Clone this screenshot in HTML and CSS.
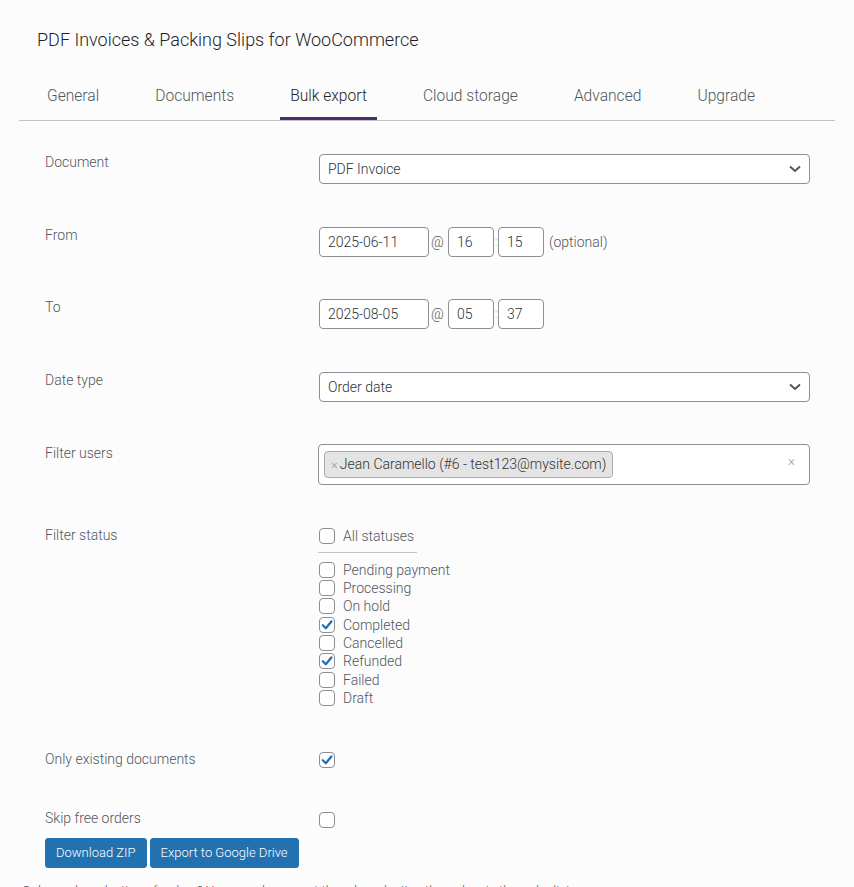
FILE: index.html
```html
<!DOCTYPE html>
<html lang="en">
<head>
<meta charset="utf-8">
<title>Bulk export</title>
<link rel="stylesheet" href="styles.css">
</head>
<body>
<div class="wrap">
  <h1 class="title">PDF Invoices &amp; Packing Slips for WooCommerce</h1>
  <nav class="tabs">
    <a class="tab">General</a>
    <a class="tab">Documents</a>
    <a class="tab active">Bulk export</a>
    <a class="tab">Cloud storage</a>
    <a class="tab">Advanced</a>
    <a class="tab">Upgrade</a>
  </nav>

  <div class="form">
    <div class="row">
      <div class="label">Document</div>
      <div class="field">
        <div class="select"><span>PDF Invoice</span>
          <svg class="chev" width="12" height="8" viewBox="0 0 12 8"><polyline points="1,1.5 6,6 11,1.5" fill="none" stroke="#50575e" stroke-width="2"/></svg>
        </div>
      </div>
    </div>

    <div class="row">
      <div class="label">From</div>
      <div class="field inline">
        <div class="input date">2025-06-11</div><span class="sep at">@</span><div class="input time">16</div><span class="sep colon">:</span><div class="input time">15</div><span class="opt">(optional)</span>
      </div>
    </div>

    <div class="row">
      <div class="label">To</div>
      <div class="field inline">
        <div class="input date">2025-08-05</div><span class="sep at">@</span><div class="input time">05</div><span class="sep colon">:</span><div class="input time">37</div>
      </div>
    </div>

    <div class="row">
      <div class="label">Date type</div>
      <div class="field">
        <div class="select"><span>Order date</span>
          <svg class="chev" width="12" height="8" viewBox="0 0 12 8"><polyline points="1,1.5 6,6 11,1.5" fill="none" stroke="#50575e" stroke-width="2"/></svg>
        </div>
      </div>
    </div>

    <div class="row">
      <div class="label">Filter users</div>
      <div class="field flush">
        <div class="multi">
          <span class="chip"><span class="chip-x">×</span>Jean Caramello (#6 - test123@mysite.com)</span>
          <span class="clear">×</span>
        </div>
      </div>
    </div>

    <div class="row status">
      <div class="label">Filter status</div>
      <div class="field flush">
        <label class="check"><span class="box"></span>All statuses</label>
        <div class="divider"></div>
        <label class="check"><span class="box"></span>Pending payment</label>
        <label class="check"><span class="box"></span>Processing</label>
        <label class="check"><span class="box"></span>On hold</label>
        <label class="check"><span class="box on"><svg width="14" height="14" viewBox="0 0 14 14"><path d="M2.8 7.2 L5.8 10.2 L11.4 3.4" fill="none" stroke="#2271b1" stroke-width="2.3" stroke-linecap="round" stroke-linejoin="round"/></svg></span>Completed</label>
        <label class="check"><span class="box"></span>Cancelled</label>
        <label class="check"><span class="box on"><svg width="14" height="14" viewBox="0 0 14 14"><path d="M2.8 7.2 L5.8 10.2 L11.4 3.4" fill="none" stroke="#2271b1" stroke-width="2.3" stroke-linecap="round" stroke-linejoin="round"/></svg></span>Refunded</label>
        <label class="check"><span class="box"></span>Failed</label>
        <label class="check"><span class="box"></span>Draft</label>
      </div>
    </div>

    <div class="row">
      <div class="label">Only existing documents</div>
      <div class="field single">
        <span class="box"><svg width="14" height="14" viewBox="0 0 14 14"><path d="M2.8 7.2 L5.8 10.2 L11.4 3.4" fill="none" stroke="#2271b1" stroke-width="2.3" stroke-linecap="round" stroke-linejoin="round"/></svg></span>
      </div>
    </div>

    <div class="row last">
      <div class="label">Skip free orders</div>
      <div class="field single lower">
        <span class="box"></span>
      </div>
    </div>
  </div>

  <div class="buttons">
    <button class="btn">Download ZIP</button>
    <button class="btn">Export to Google Drive</button>
  </div>

  <p class="note">Only need a selection of orders? You can also export them by selecting the orders in the order list.</p>
</div>
</body>
</html>
```

FILE: styles.css
```css
html, body {
  margin: 0;
  padding: 0;
  background: #fcfcfc;
  font-family: Roboto, "Liberation Sans", sans-serif;
  font-weight: 300;
  color: #50575e;
}

.wrap {
  margin: 0 19px;
}

.title {
  margin: 0;
  padding: 28px 0 0 18px;
  font-size: 18px;
  font-weight: 300;
  line-height: 23px;
  color: #1d2327;
}

.tabs {
  display: flex;
  gap: 36px;
  margin-top: 25px;
  padding-left: 18px;
  border-bottom: 1px solid #c3c4c7;
}

.tab {
  display: block;
  padding: 10px 10px 11px;
  line-height: 20px;
  font-size: 15.6px;
  font-weight: 300;
  color: #50575e;
  border-bottom: 3px solid transparent;
}

.tab.active {
  color: #1d2327;
  border-bottom-color: #4f2b73;
}

.form {
  padding-top: 11px;
  margin-left: 26px;
}

.row {
  display: grid;
  grid-template-columns: 274px 491px;
  padding: 21px 0 20.7px;
}

.row.status {
  padding-bottom: 21.7px;
}

.row.last {
  padding-bottom: 11px;
}

.label {
  font-size: 14px;
  line-height: 18px;
  color: #50575e;
}

.field {
  padding-top: 1px;
  font-size: 14px;
  color: #2c3338;
}

.field.flush {
  padding-top: 0;
}

.field.inline {
  display: flex;
  align-items: center;
}

.field.single {
  display: flex;
  align-items: flex-start;
  height: 18px;
  padding-top: 2px;
  box-sizing: border-box;
}

.field.single.lower {
  padding-top: 3px;
}

.select {
  box-sizing: border-box;
  height: 30px;
  border: 1px solid #8c8f94;
  border-radius: 4px;
  background: #fff;
  display: flex;
  align-items: center;
  justify-content: space-between;
  padding: 0 8px 0 8px;
  font-size: 14px;
  color: #2c3338;
}

.chev {
  display: block;
}

.input {
  box-sizing: border-box;
  height: 30px;
  border: 1px solid #8c8f94;
  border-radius: 4px;
  background: #fff;
  display: flex;
  align-items: center;
  padding: 0 8px;
  color: #2c3338;
}

.input.date { width: 110px; }
.input.time { width: 46px; }

.sep {
  color: #50575e;
  font-size: 14px;
}
.sep.at { width: 19px; text-align: left; padding-left: 2px; box-sizing: border-box; }
.sep.colon { width: 4px; text-align: center; font-size: 12px; color: #a0a5aa; }

.opt {
  margin-left: 5px;
  color: #50575e;
}

.multi {
  box-sizing: border-box;
  height: 41px;
  margin-left: -1px;
  border: 1px solid #8c8f94;
  border-radius: 4px;
  background: #fff;
  display: flex;
  align-items: center;
  justify-content: space-between;
  padding: 0 14px 0 5px;
}

.chip {
  box-sizing: border-box;
  height: 27px;
  display: inline-flex;
  align-items: center;
  padding: 0 6px 0 6px;
  background: #e4e4e4;
  border: 1px solid #aaa;
  border-radius: 4px;
  color: #333;
  font-size: 14px;
}

.chip-x {
  color: #999;
  font-size: 13px;
  margin-right: 2px;
}

.clear {
  color: #999;
  font-size: 14px;
  margin-top: -6px;
}

.check {
  display: flex;
  align-items: center;
  height: 18.3px;
  font-size: 14px;
  color: #50575e;
}

.check .box {
  margin-right: 8px;
}

.box {
  box-sizing: border-box;
  width: 16px;
  height: 16px;
  border: 1px solid #8c8f94;
  border-radius: 4px;
  background: #fff;
  display: inline-flex;
  align-items: center;
  justify-content: center;
  flex: none;
}

.divider {
  width: 99px;
  height: 1px;
  background: #c3c4c7;
  margin: 7px 0 8px -1px;
}

.buttons {
  display: flex;
  gap: 3px;
  margin-left: 26px;
}

.btn {
  height: 30px;
  padding: 0 10px;
  border: 1px solid #2271b1;
  border-radius: 3px;
  background: #2271b1;
  color: #fff;
  font-family: Roboto, "Liberation Sans", sans-serif;
  font-weight: 300;
  font-size: 13px;
  line-height: 28px;
}

.note {
  margin: 15px 0 0 3px;
  font-size: 13px;
  color: #50575e;
}
```
